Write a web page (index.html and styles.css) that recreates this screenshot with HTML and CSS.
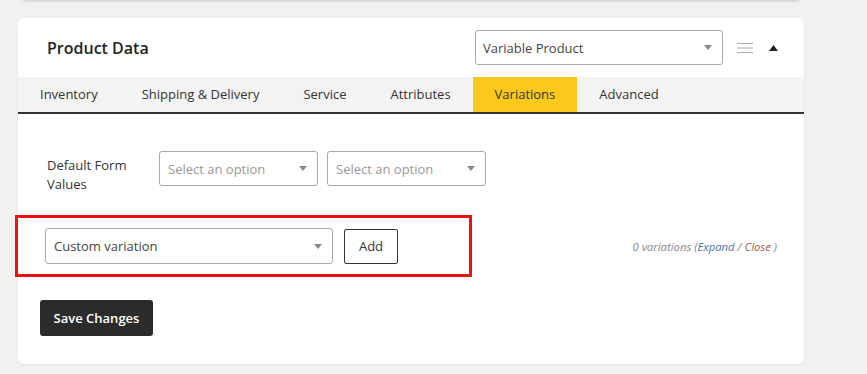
FILE: index.html
```html
<!DOCTYPE html>
<html>
<head>
<meta charset="utf-8">
<link rel="stylesheet" href="styles.css">
</head>
<body>
<div class="page">
  <div class="prev-card"></div>
  <div class="card">
    <div class="card-head">
      <h2 class="title">Product Data</h2>
      <div class="head-tools">
        <div class="select select-type"><span>Variable Product</span><i class="caret"></i></div>
        <svg class="handle" width="16" height="12" viewBox="0 0 16 12"><path d="M0 1.5h16M0 6h16M0 10.5h16" stroke="#aaa" stroke-width="1"/></svg>
        <svg class="toggle" width="9" height="6" viewBox="0 0 9 6"><path d="M0 6L4.5 0L9 6Z" fill="#222"/></svg>
      </div>
    </div>
    <nav class="tabs">
      <span class="tab">Inventory</span>
      <span class="tab">Shipping &amp; Delivery</span>
      <span class="tab">Service</span>
      <span class="tab">Attributes</span>
      <span class="tab active">Variations</span>
      <span class="tab">Advanced</span>
    </nav>
    <div class="card-body">
      <div class="defaults">
        <div class="defaults-label">Default Form<br>Values</div>
        <div class="select select-opt"><span class="ph">Select an option</span><i class="caret"></i></div>
        <div class="select select-opt"><span class="ph">Select an option</span><i class="caret"></i></div>
      </div>
      <div class="var-row">
        <div class="add-group">
          <div class="select select-custom"><span>Custom variation</span><i class="caret"></i></div>
          <button class="btn-add">Add</button>
          <div class="highlight"></div>
        </div>
        <div class="var-count">0 variations (<a class="expand">Expand</a> / <a class="close">Close</a> )</div>
      </div>
      <button class="btn-save">Save Changes</button>
    </div>
  </div>
</div>
</body>
</html>
```
FILE: styles.css
```css
* { box-sizing: border-box; }
html, body { margin: 0; padding: 0; }
body {
  background: #f1f1f1;
  font-family: "Open Sans", "Noto Sans", sans-serif;
  color: #333;
  width: 867px;
  height: 374px;
  overflow: hidden;
}
.page { padding-left: 18px; }
.prev-card {
  width: 778px;
  height: 10px;
  margin: -10px 0 18px 4px;
  background: #fff;
  box-shadow: 0 1px 3px rgba(0,0,0,0.18);
  border-radius: 0 0 4px 4px;
}
.card {
  width: 786px;
  background: #fff;
  border-radius: 6px;
  box-shadow: 0 1px 2px rgba(0,0,0,0.08);
  padding-bottom: 28px;
}
.card-head {
  display: flex;
  align-items: center;
  justify-content: space-between;
  padding: 12px 26px 12px 29px;
  height: 59px;
}
.title {
  margin: 0;
  font-size: 16px;
  font-weight: 600;
  color: #222;
}
.head-tools { display: flex; align-items: center; }
.select {
  display: flex;
  align-items: center;
  justify-content: space-between;
  border: 1px solid #aaa;
  border-radius: 3px;
  background: #fff;
  font-size: 13px;
  color: #444;
  padding: 0 10px 0 8px;
}
.caret {
  width: 0; height: 0;
  border-left: 4px solid transparent;
  border-right: 4px solid transparent;
  border-top: 5px solid #888;
}
.select-type { width: 248px; height: 35px; padding-left: 7px; }
.handle { margin-left: 14px; }
.toggle { margin-left: 16px; }
.tabs {
  display: flex;
  height: 37px;
  background: #f3f3f3;
  border-bottom: 2px solid #333;
}
.tab {
  padding: 0 22px;
  line-height: 35px;
  font-size: 13px;
  font-weight: 500;
  color: #333;
}
.tab.active { background: #fbc91a; }
.card-body { padding: 37px 27px 0 22px; }
.defaults { display: flex; align-items: flex-start; padding-left: 7px; height: 35px; }
.defaults-label {
  width: 112px;
  font-size: 13px;
  line-height: 19px;
  padding-top: 5px;
  color: #333;
}
.select-opt { width: 159px; height: 35px; margin-right: 9px; }
.ph { color: #999; }
.var-row {
  display: flex;
  align-items: center;
  justify-content: space-between;
  margin-top: 42px;
  padding-left: 5px;
}
.add-group { position: relative; display: flex; align-items: center; }
.select-custom { width: 288px; height: 36px; }
.btn-add {
  margin-left: 11px;
  width: 54px;
  height: 35px;
  border: 1px solid #333;
  border-radius: 2px;
  background: #fff;
  font-family: inherit;
  font-size: 13px;
  color: #333;
  padding: 0;
}
.highlight {
  position: absolute;
  left: -30px;
  top: -13px;
  width: 457px;
  height: 62px;
  border: 3px solid #ee1111;
  pointer-events: none;
}
.var-count {
  font-size: 11.3px;
  font-style: italic;
  color: #888;
}
.expand { color: #4a73b5; }
.close { color: #a35a4a; }
.btn-save {
  margin-top: 36px;
  width: 113px;
  height: 36px;
  background: #2b2b2b;
  color: #fff;
  border: none;
  border-radius: 3px;
  font-family: inherit;
  font-size: 13px;
  font-weight: 600;
  padding: 0;
}
```
